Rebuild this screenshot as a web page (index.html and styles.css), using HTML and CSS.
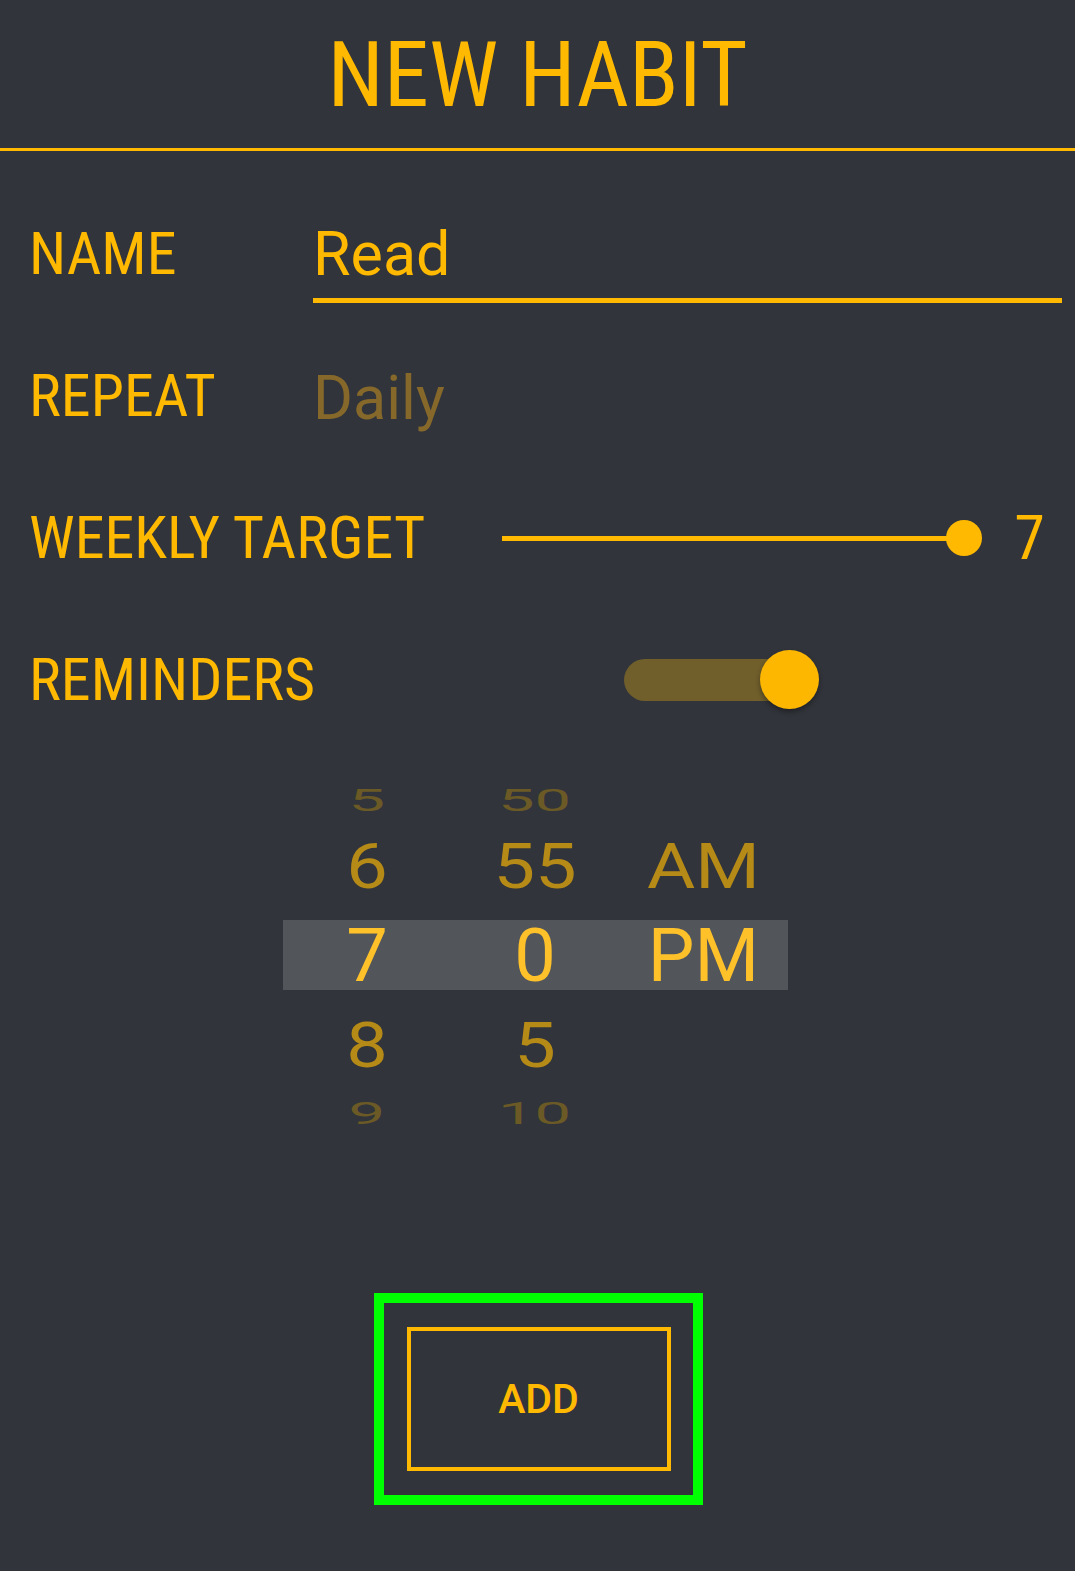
FILE: index.html
```html
<!DOCTYPE html>
<html>
<head>
<meta charset="utf-8">
<link rel="stylesheet" href="styles.css">
</head>
<body>
<div class="screen">
  <header class="header"><h1 class="title">NEW HABIT</h1></header>
  <div class="form">
    <div class="row">
      <span class="label">NAME</span>
      <div class="name-field"><span class="name-text">Read</span></div>
    </div>
    <div class="row">
      <span class="label">REPEAT</span>
      <span class="value-dim">Daily</span>
    </div>
    <div class="row">
      <span class="label label-auto">WEEKLY TARGET</span>
      <div class="slider"><div class="slider-track"></div><div class="slider-knob"></div></div>
      <span class="slider-value">7</span>
    </div>
    <div class="row">
      <span class="label">REMINDERS</span>
      <div class="switch"><div class="switch-track"></div><div class="switch-knob"></div></div>
    </div>
  </div>
  <div class="picker">
    <div class="picker-row r1"><span>5</span><span>50</span><span></span></div>
    <div class="picker-row r2"><span>6</span><span>55</span><span>AM</span></div>
    <div class="picker-row r3"><span>7</span><span>0</span><span>PM</span></div>
    <div class="picker-row r4"><span>8</span><span>5</span><span></span></div>
    <div class="picker-row r5"><span>9</span><span>10</span><span></span></div>
  </div>
  <div class="actions">
    <div class="focus-ring"><div class="add-btn">ADD</div></div>
  </div>
</div>
</body>
</html>
```

FILE: styles.css
```css
html, body {
  margin: 0;
  padding: 0;
  background: #31343a;
}
.screen {
  width: 1075px;
  height: 1571px;
  background: #31343a;
  color: #ffb900;
  font-family: "Roboto Condensed", Roboto, sans-serif;
  font-stretch: condensed;
  overflow: hidden;
}
.header {
  height: 148px;
  border-bottom: 3px solid #ffb900;
  display: flex;
  align-items: center;
  justify-content: center;
}
.title {
  margin: 0;
  font-weight: 400;
  font-size: 91px;
  line-height: 1;
  padding-top: 2px;
  letter-spacing: 0;
}
.form {
  padding: 32px 0 0 29px;
}
.row {
  height: 142px;
  display: flex;
  align-items: center;
}
.label {
  width: 284px;
  flex: none;
  font-size: 60px;
  line-height: 72px;
}
.label-auto {
  width: auto;
}
.name-field {
  width: 749px;
  height: 62px;
  margin-top: 18px;
  padding-bottom: 13px;
  border-bottom: 5px solid #ffb900;
  font-family: Roboto, sans-serif;
  font-stretch: normal;
  font-size: 61px;
  line-height: 62px;
}
.value-dim {
  font-family: Roboto, sans-serif;
  font-stretch: normal;
  font-size: 61px;
  line-height: 72px;
  color: #86692a;
  margin-top: 4px;
}
.slider {
  margin-left: auto;
  width: 480px;
  height: 36px;
  display: flex;
  align-items: center;
  position: relative;
}
.slider-track {
  flex: 1;
  height: 5px;
  background: #ffb900;
  margin-right: 17px;
}
.slider-knob {
  position: absolute;
  right: 0;
  top: 0;
  width: 36px;
  height: 36px;
  border-radius: 50%;
  background: #ffb900;
}
.slider-value {
  width: 35px;
  margin-left: 30px;
  margin-right: 28px;
  font-size: 62px;
  line-height: 72px;
  text-align: center;
}
.switch {
  margin-left: 311px;
  width: 196px;
  height: 62px;
  position: relative;
  display: flex;
  align-items: center;
}
.switch-track {
  width: 180px;
  height: 42px;
  border-radius: 21px;
  background: #705e2b;
}
.switch-knob {
  position: absolute;
  left: 136px;
  top: 1px;
  width: 59px;
  height: 59px;
  border-radius: 50%;
  background: #fdb700;
  box-shadow: 0 3px 5px rgba(0, 0, 0, 0.35);
}
.picker {
  width: 505px;
  margin: 16px 0 0 283px;
  font-family: Roboto, sans-serif;
  font-stretch: normal;
  font-size: 74px;
}
.picker-row {
  display: grid;
  grid-template-columns: 168px 168px 169px;
  align-items: center;
  justify-items: center;
  line-height: 1;
}
.picker-row span {
  display: block;
}
.r1 { height: 66px; color: #6b5a26; }
.r1 span { transform: translateY(-4px) scale(0.88, 0.43); }
.r2 { height: 87px; color: #b68a16; }
.r2 span { transform: translateY(-10px) scaleY(0.86); }
.r3 { height: 70px; color: #fec12a; background: #52555a; }
.r3 span { transform: translateY(-1px); }
.r4 { height: 89px; color: #b68a16; }
.r4 span { transform: translateY(11px) scaleY(0.86); }
.r5 { height: 66px; color: #6b5a26; }
.r5 span { transform: translateY(-3px) scale(0.88, 0.43); }
.actions {
  margin-top: 148px;
  display: flex;
  justify-content: center;
}
.focus-ring {
  margin-left: 2px;
  width: 309px;
  height: 192px;
  border: 10px solid #00ff00;
  display: flex;
  align-items: center;
  justify-content: center;
}
.add-btn {
  width: 256px;
  height: 136px;
  border: 4px solid #ffb900;
  display: flex;
  align-items: center;
  justify-content: center;
  font-family: Roboto, sans-serif;
  font-stretch: normal;
  font-weight: 500;
  font-size: 41px;
}
```
